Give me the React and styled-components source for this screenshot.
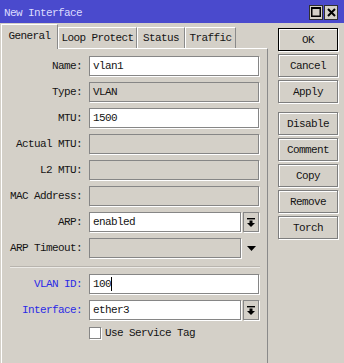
import styled, { createGlobalStyle } from "styled-components";

const GlobalStyle = createGlobalStyle`
    html, body {
        margin: 0;
        padding: 0;
        background: #d4d0c8;
    }
    * {
        box-sizing: border-box;
    }
`

const mono = `"Liberation Mono", "DejaVu Sans Mono", monospace`

const rows = [
    { label: "Name:", value: "vlan1" },
    { label: "Type:", value: "VLAN", disabled: true },
    { label: "MTU:", value: "1500" },
    { label: "Actual MTU:", disabled: true },
    { label: "L2 MTU:", disabled: true },
    { label: "MAC Address:", disabled: true },
    { label: "ARP:", value: "enabled", select: true },
    { label: "ARP Timeout:", disabled: true, arrow: true },
]

const tabs = [
    { name: "General", w: 57, active: true },
    { name: "Loop Protect", w: 79 },
    { name: "Status", w: 48 },
    { name: "Traffic", w: 51 },
]

const buttons = ["OK", "Cancel", "Apply", null, "Disable", "Comment", "Copy", "Remove", "Torch"]

const PickIcon = () => (
    <svg width="8" height="9" viewBox="0 0 8 9">
        <rect x="0" y="0" width="8" height="1.4" fill="#000" />
        <rect x="2.5" y="2.5" width="3" height="2.5" fill="#000" />
        <polygon points="0,5 8,5 4,9" fill="#000" />
    </svg>
)

const Triangle = () => (
    <svg width="9" height="5" viewBox="0 0 9 5">
        <polygon points="0,0 9,0 4.5,5" fill="#000" />
    </svg>
)

const App = () => {
    return (
        <>
            <GlobalStyle />
            <Window>
                <TitleBar>
                    <Title>New Interface</Title>
                    <TitleButtons>
                        <WinButton>
                            <svg width="10" height="10" viewBox="0 0 10 10">
                                <rect x="0.75" y="0.75" width="8.5" height="8.5" fill="none" stroke="#000" strokeWidth="1.5" />
                                <rect x="0" y="0" width="10" height="2" fill="#000" />
                            </svg>
                        </WinButton>
                        <WinButton>
                            <svg width="9" height="9" viewBox="0 0 9 9">
                                <path d="M1 1 L8 8 M8 1 L1 8" stroke="#000" strokeWidth="2" />
                            </svg>
                        </WinButton>
                    </TitleButtons>
                </TitleBar>
                <Body>
                    <Main>
                        <TabRow>
                            {tabs.map((tab) =>
                                <Tab key={tab.name} $active={tab.active} $w={tab.w}>{tab.name}</Tab>
                            )}
                        </TabRow>
                        <Panel>
                            {rows.map((row) =>
                                <Row key={row.label}>
                                    <Label>{row.label}</Label>
                                    <Field $disabled={row.disabled} $short={row.select || row.arrow}>
                                        {row.value}
                                    </Field>
                                    {row.select && <DropButton><PickIcon /></DropButton>}
                                    {row.arrow && <ArrowSlot><Triangle /></ArrowSlot>}
                                </Row>
                            )}
                            <Separator />
                            <Row>
                                <Label $blue>VLAN ID:</Label>
                                <Field>100<Caret /></Field>
                            </Row>
                            <Row>
                                <Label $blue>Interface:</Label>
                                <Field $short>ether3</Field>
                                <DropButton><PickIcon /></DropButton>
                            </Row>
                            <CheckRow>
                                <Box />
                                <CheckText>Use Service Tag</CheckText>
                            </CheckRow>
                        </Panel>
                    </Main>
                    <Side>
                        {buttons.map((b, index) =>
                            b ? <Button key={b} $default={b === "OK"}>{b}</Button> : <Spacer key={index} />
                        )}
                    </Side>
                </Body>
            </Window>
        </>
    )
}

const Window = styled.div`
    width: 344px;
    height: 363px;
    background: #d4d0c8;
    display: flex;
    flex-direction: column;
    overflow: hidden;
    font-family: ${mono};
    font-size: 11px;
    letter-spacing: -0.6px;
    color: #141414;
`

const TitleBar = styled.div`
    height: 23px;
    background: #4a4acd;
    display: flex;
    align-items: center;
    justify-content: space-between;
    padding: 0 6px 0 4px;
`

const Title = styled.span`
    color: #dcdcff;
    padding-top: 2px;
`

const TitleButtons = styled.div`
    display: flex;
    gap: 1px;
    padding-top: 1px;
`

const WinButton = styled.div`
    width: 14px;
    height: 15px;
    background: #d4d0c8;
    border: 1px solid #303030;
    display: flex;
    align-items: center;
    justify-content: center;
`

const Body = styled.div`
    flex: 1;
    display: flex;
`

const Main = styled.div`
    width: 267px;
    margin-left: 1px;
    display: flex;
    flex-direction: column;
`

const TabRow = styled.div`
    height: 25px;
    display: flex;
    align-items: flex-end;
    padding-top: 1px;
`

const Tab = styled.div`
    width: ${p => p.$w}px;
    height: ${p => p.$active ? 25 : 21}px;
    margin-bottom: ${p => p.$active ? -1 : 0}px;
    position: relative;
    z-index: ${p => p.$active ? 2 : 1};
    background: #d4d0c8;
    border-top: 1px solid #fff;
    border-left: 1px solid #fff;
    border-right: 1px solid #8a8a8a;
    display: flex;
    align-items: center;
    justify-content: center;
    padding-bottom: ${p => p.$active ? 3 : 0}px;
`

const Panel = styled.div`
    flex: 1;
    border-top: 1px solid #fff;
    border-left: 1px solid #fff;
    border-right: 1px solid #8a8a8a;
    padding: 7px 7px 0 0;
    display: flex;
    flex-direction: column;
    gap: 6px;
`

const Row = styled.div`
    height: 20px;
    display: flex;
    align-items: center;
`

const Label = styled.div`
    width: 80px;
    margin-right: 7px;
    text-align: right;
    color: ${p => p.$blue ? "#2a2ae6" : "#141414"};
`

const Field = styled.div`
    width: ${p => p.$short ? 152 : 170}px;
    height: 20px;
    background: ${p => p.$disabled ? "#d4d0c8" : "#fff"};
    border: 1px solid #868686;
    box-shadow: 1px 1px 0 #fff;
    padding-left: 3px;
    display: flex;
    align-items: center;
    white-space: nowrap;
`

const Caret = styled.span`
    display: inline-block;
    width: 1px;
    height: 14px;
    background: #000;
`

const DropButton = styled.div`
    width: 16px;
    height: 20px;
    margin-left: 2px;
    border: 1px solid #868686;
    box-shadow: 1px 1px 0 #fff;
    display: flex;
    align-items: center;
    justify-content: center;
`

const ArrowSlot = styled.div`
    width: 16px;
    margin-left: 2px;
    display: flex;
    justify-content: center;
`

const Separator = styled.div`
    height: 2px;
    margin: 2px 0 0 8px;
    width: 250px;
    border-top: 1px solid #b8b4ae;
    border-bottom: 1px solid #eceae6;
`

const CheckRow = styled.div`
    height: 12px;
    margin-top: 1px;
    display: flex;
    align-items: center;
    padding-left: 87px;
`

const Box = styled.div`
    width: 12px;
    height: 12px;
    background: #fff;
    border: 1px solid #868686;
    box-shadow: 1px 1px 0 #fff;
    margin-right: 4px;
`

const CheckText = styled.span`
    white-space: nowrap;
`

const Side = styled.div`
    width: 60px;
    margin-left: 10px;
    padding-top: 5px;
    display: flex;
    flex-direction: column;
    gap: 3px;
`

const Spacer = styled.div`
    height: 3px;
`

const Button = styled.div`
    height: 23px;
    border: 1px solid ${p => p.$default ? "#000" : "#7e7e7e"};
    box-shadow: inset 1px 1px 0 #fff, 1px 1px 0 #fff;
    display: flex;
    align-items: center;
    justify-content: center;
`

export default App
